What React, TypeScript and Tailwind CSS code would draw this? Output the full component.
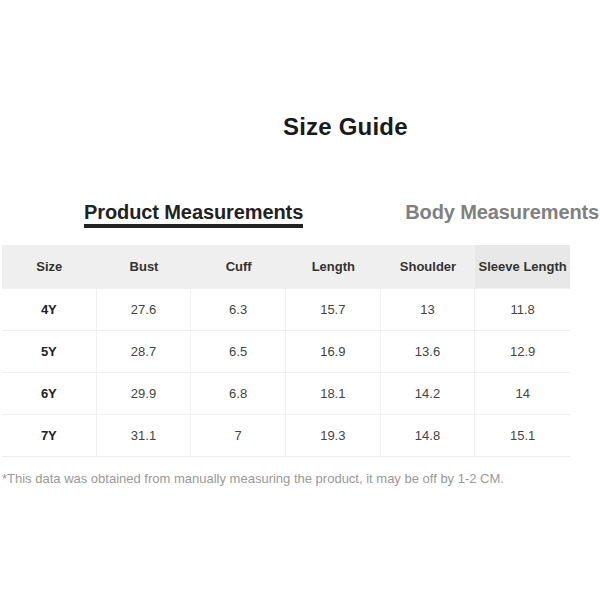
import React from 'react';

const headers = ['Size', 'Bust', 'Cuff', 'Length', 'Shoulder', 'Sleeve Length'];

const rows = [
  ['4Y', '27.6', '6.3', '15.7', '13', '11.8'],
  ['5Y', '28.7', '6.5', '16.9', '13.6', '12.9'],
  ['6Y', '29.9', '6.8', '18.1', '14.2', '14'],
  ['7Y', '31.1', '7', '19.3', '14.8', '15.1'],
];

export default function App() {
  return (
    <div className="w-[600px] h-[600px] bg-white overflow-hidden font-['Liberation_Sans',Arial,sans-serif]">
      {/* Title */}
      <div className="pt-[113px] pl-[283px] h-[200px]">
        <h1 className="text-[24px] font-bold text-[#1a1a1a] leading-[28px] tracking-[0.2px]">Size Guide</h1>
      </div>

      {/* Tabs */}
      <div className="flex items-start pl-[84px] gap-[102px] h-[45px]">
        <div className="flex flex-col">
          <span className="text-[20px] font-bold text-[#222] leading-[24px] tracking-[-0.1px] whitespace-nowrap">
            Product Measurements
          </span>
          <div className="h-[4px] bg-[#222]"></div>
        </div>
        <span className="text-[20px] font-bold text-[#808080] leading-[24px] tracking-[-0.1px] whitespace-nowrap">
          Body Measurements
        </span>
      </div>

      {/* Table */}
      <div className="ml-[2px] w-[568px] border-b border-[#eeeeee]">
        <div className="grid grid-cols-6 h-[43px] bg-[#efefef]">
          {headers.map((h, i) => (
            <div
              key={h}
              className={`flex items-center justify-center text-[13px] font-bold text-[#333] ${i === 5 ? 'bg-[#e8e8e8]' : ''}`}
            >
              {h}
            </div>
          ))}
        </div>
        {rows.map((r) => (
          <div key={r[0]} className="grid grid-cols-6 h-[42px] border-t border-[#f0f0f0]">
            {r.map((c, i) => (
              <div
                key={i}
                className={`flex items-center justify-center text-[13px] ${i === 0 ? 'font-bold text-[#222]' : 'text-[#444]'} ${i < 5 ? 'border-r border-[#f0f0f0]' : ''}`}
              >
                {c}
              </div>
            ))}
          </div>
        ))}
      </div>

      {/* Note */}
      <p className="mt-[14px] pl-[2px] text-[13px] text-[#999] leading-[16px]">
        *This data was obtained from manually measuring the product, it may be off by 1-2 CM.
      </p>
    </div>
  );
}
